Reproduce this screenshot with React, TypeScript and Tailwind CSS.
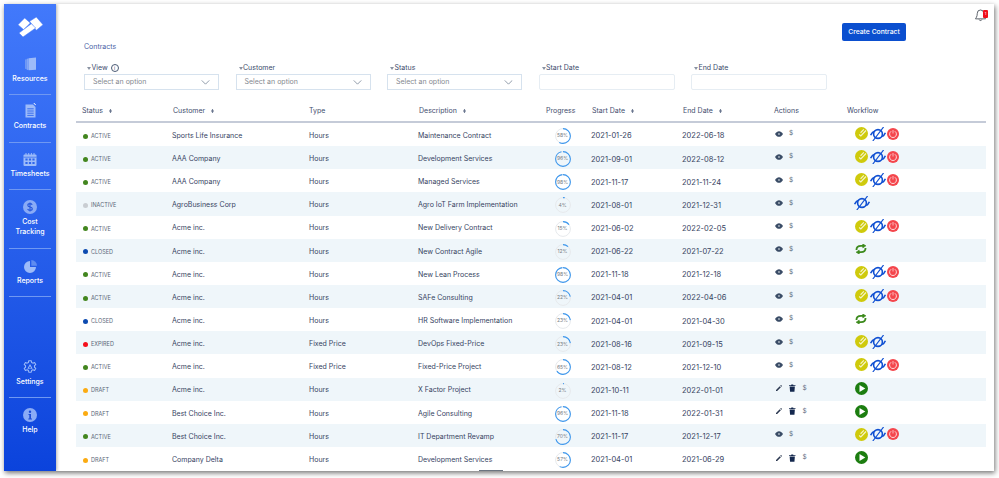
import type { ReactNode } from "react"

type Row = {
  status: string
  customer: string
  type: string
  description: string
  progress: number
  start: string
  end: string
  flow: string
}

const rows: Row[] = [
  { status: "ACTIVE", customer: "Sports Life Insurance", type: "Hours", description: "Maintenance Contract", progress: 58, start: "2021-01-26", end: "2022-06-18", flow: "full" },
  { status: "ACTIVE", customer: "AAA Company", type: "Hours", description: "Development Services", progress: 96, start: "2021-09-01", end: "2022-08-12", flow: "full" },
  { status: "ACTIVE", customer: "AAA Company", type: "Hours", description: "Managed Services", progress: 98, start: "2021-11-17", end: "2021-11-24", flow: "full" },
  { status: "INACTIVE", customer: "AgroBusiness Corp", type: "Hours", description: "Agro IoT Farm Implementation", progress: 4, start: "2021-08-01", end: "2021-12-31", flow: "eye" },
  { status: "ACTIVE", customer: "Acme inc.", type: "Hours", description: "New Delivery Contract", progress: 15, start: "2021-06-02", end: "2022-02-05", flow: "full" },
  { status: "CLOSED", customer: "Acme inc.", type: "Hours", description: "New Contract Agile", progress: 12, start: "2021-06-22", end: "2021-07-22", flow: "sync" },
  { status: "ACTIVE", customer: "Acme inc.", type: "Hours", description: "New Lean Process", progress: 98, start: "2021-11-18", end: "2021-12-18", flow: "full" },
  { status: "ACTIVE", customer: "Acme inc.", type: "Hours", description: "SAFe Consulting", progress: 22, start: "2021-04-01", end: "2022-04-06", flow: "full" },
  { status: "CLOSED", customer: "Acme inc.", type: "Hours", description: "HR Software Implementation", progress: 23, start: "2021-04-01", end: "2021-04-30", flow: "sync" },
  { status: "EXPIRED", customer: "Acme inc.", type: "Fixed Price", description: "DevOps Fixed-Price", progress: 23, start: "2021-08-16", end: "2021-09-15", flow: "expired" },
  { status: "ACTIVE", customer: "Acme inc.", type: "Fixed Price", description: "Fixed-Price Project", progress: 65, start: "2021-08-12", end: "2021-12-10", flow: "full" },
  { status: "DRAFT", customer: "Acme inc.", type: "Hours", description: "X Factor Project", progress: 2, start: "2021-10-11", end: "2022-01-01", flow: "play" },
  { status: "DRAFT", customer: "Best Choice Inc.", type: "Hours", description: "Agile Consulting", progress: 96, start: "2021-11-18", end: "2022-01-31", flow: "play" },
  { status: "ACTIVE", customer: "Best Choice Inc.", type: "Hours", description: "IT Department Revamp", progress: 70, start: "2021-11-17", end: "2021-12-17", flow: "full" },
  { status: "DRAFT", customer: "Company Delta", type: "Hours", description: "Development Services", progress: 57, start: "2021-04-01", end: "2021-06-29", flow: "play" },
]

const dotColors: Record<string, string> = {
  ACTIVE: "bg-[#43861f]",
  INACTIVE: "bg-[#c9cdd2]",
  CLOSED: "bg-[#0d4bb0]",
  EXPIRED: "bg-[#f5101c]",
  DRAFT: "bg-[#fbab12]",
}

function NavItem({ icon, label, divider = true, className = "" }: { icon: ReactNode; label: ReactNode; divider?: boolean; className?: string }) {
  return (
    <div className={`mx-[5px] flex flex-col items-center text-center text-[7px] font-medium leading-[10.5px] text-white ${divider ? "border-b border-[#6f98f2]" : ""} ${className}`}>
      {icon}
      <span className="mt-[2.75px]">{label}</span>
    </div>
  )
}

function Logo() {
  return (
    <svg viewBox="0 0 75 60" className="h-[20px] w-[25px]" fill="#fff" stroke="#3f76f8" strokeWidth="1.5">
      <polygon points="0,23 20,3 37,18 17,38" />
      <polygon points="35,13 55,0 75,23 55,40" />
      <polygon points="3,48 40,20 53,33 15,60" />
    </svg>
  )
}

const navIcon = "#9dbbf9"

function ResourcesIcon() {
  return (
    <svg viewBox="0 0 12 14" className="h-[14px] w-[11px]">
      <path d="M0 2.200 2 1.800v11l-2-.5z" fill="#6f98f3" />
      <path d="M2 1.400 4 1v12.200l-2 .3z" fill="#83a7f6" />
      <path d="M4 .7 12 0v13.200l-8 .7z" fill={navIcon} />
    </svg>
  )
}

function ContractsIcon() {
  return (
    <svg viewBox="0 0 11 15" className="h-[15px] w-[11px]">
      <path d="M.5 1.500h7.500l2.500 2.500v10.500H.5z" fill={navIcon} />
      <path d="M2.300 5.800h6.400M2.300 8h6.400M2.300 10.200h6.400M2.300 12.400h6.400" stroke="#2f66ee" strokeWidth="0.9" />
      <path d="M8.800 0l2 2.200" stroke="#fff" strokeWidth="1" />
    </svg>
  )
}

function CalendarIcon() {
  return (
    <svg viewBox="0 0 14 13" className="h-[13px] w-[14px]">
      <rect x="0.500" y="1.500" width="13" height="11.500" rx="1" fill={navIcon} />
      <path d="M3 0v3M5.700 0v3M8.400 0v3M11 0v3" stroke={navIcon} strokeWidth="1" />
      <path d="M0.500 4.200h13" stroke="#2f66ee" strokeWidth="0.7" />
      <g fill="#2f66ee">
        <rect x="2.400" y="5.500" width="2.200" height="2" />
        <rect x="5.900" y="5.500" width="2.200" height="2" />
        <rect x="9.400" y="5.500" width="2.200" height="2" />
        <rect x="2.400" y="9" width="2.200" height="2" />
        <rect x="5.900" y="9" width="2.200" height="2" />
        <rect x="9.400" y="9" width="2.200" height="2" />
      </g>
    </svg>
  )
}

function CostIcon() {
  return (
    <svg viewBox="0 0 14 14" className="h-[14px] w-[14px]">
      <circle cx="7" cy="7" r="7" fill="#8aabf6" />
      <path d="M9.200 4.800C8.700 3.900 7.800 3.600 7 3.600c-1.300 0-2.200.7-2.200 1.700 0 2.400 4.500 1 4.500 3.400 0 1-1 1.700-2.300 1.700-1 0-1.900-.4-2.400-1.300M7 2.400v9.200" fill="none" stroke="#2455dc" strokeWidth="1.100" />
    </svg>
  )
}

function ReportsIcon() {
  return (
    <svg viewBox="0 0 13 13" className="h-[13px] w-[13px]">
      <path d="M6 1a6 6 0 1 0 6 6H6z" fill={navIcon} />
      <path d="M7.300 0a5.800 5.800 0 0 1 5.700 5.700H7.300z" fill="#5f8cf0" />
    </svg>
  )
}

function SettingsIcon() {
  return (
    <svg viewBox="0 0 16 16" className="h-[14px] w-[14px]" fill="none" stroke={navIcon} strokeWidth="1.200">
      <path d="M6.600.800h2.800l.4 2 1.500.8 1.900-.8 1.400 2.400-1.500 1.300v1.800l1.500 1.300-1.400 2.400-1.900-.8-1.500.8-.4 2H6.600l-.4-2-1.500-.8-1.900.8-1.400-2.400 1.500-1.300V6.500L1.400 5.200l1.400-2.400 1.900.8 1.500-.8z" strokeLinejoin="round" />
      <path d="M8 4.500 11 10H5z" fill={navIcon} stroke="none" />
      <circle cx="8" cy="8.500" r="1.200" fill="#2d60e6" stroke="none" />
    </svg>
  )
}

function HelpIcon() {
  return (
    <svg viewBox="0 0 14 14" className="h-[14px] w-[14px]">
      <circle cx="7" cy="7" r="7" fill="#8aabf6" />
      <circle cx="7" cy="3.700" r="1.200" fill="#1c4cd6" />
      <path d="M5.500 6h2.500v4.500h1v1H5.300v-1h1V7h-.8z" fill="#1c4cd6" />
    </svg>
  )
}

function Sidebar() {
  return (
    <aside className="relative flex w-[52px] shrink-0 flex-col bg-gradient-to-b from-[#4279fb] to-[#0b43dc] font-['Inter',sans-serif] shadow-[1px_0_3px_rgba(0,0,0,0.3)]">
      <div className="flex h-[53px] items-start justify-center pt-[13px]">
        <Logo />
      </div>
      <NavItem icon={<ResourcesIcon />} label="Resources" className="h-[38px]" />
      <NavItem icon={<ContractsIcon />} label="Contracts" className="h-[48px] pt-[8px]" />
      <NavItem icon={<CalendarIcon />} label="Timesheets" className="h-[47px] pt-[10px]" />
      <NavItem icon={<CostIcon />} label={<>Cost<br />Tracking</>} className="h-[59px] pt-[10px]" />
      <NavItem icon={<ReportsIcon />} label="Reports" className="h-[48px] pt-[11px]" />
      <NavItem icon={<SettingsIcon />} label="Settings" className="mt-auto h-[38px]" />
      <NavItem icon={<HelpIcon />} label="Help" divider={false} className="mb-[35px] h-[38px] pt-[10px]" />
    </aside>
  )
}

function Chevron() {
  return (
    <svg viewBox="0 0 10 6" className="h-[5px] w-[9px]" fill="none" stroke="#5b6b80" strokeWidth="0.8">
      <path d="M.5.500 5 5 9.500.500" />
    </svg>
  )
}

function FilterLabel({ label, info }: { label: string; info?: boolean }) {
  return (
    <div className="mb-[1px] flex h-[10px] items-center pl-[3px] text-[7px] leading-[10px] text-[#3a4a6b]">
      <span className="mr-[0.5px] h-0 w-0 border-x-[2.5px] border-t-[3.5px] border-x-transparent border-t-[#8a93a3]" />
      {label}
      {info && (
        <span className="ml-[3px] flex h-[8px] w-[8px] items-center justify-center rounded-full border-[0.7px] border-[#4a5a75] text-[5px] leading-none">i</span>
      )}
    </div>
  )
}

function SelectFilter({ label, info }: { label: string; info?: boolean }) {
  return (
    <div className="w-[135px]">
      <FilterLabel label={label} info={info} />
      <div className="flex h-[16px] items-center justify-between border border-[#d6e2ee] pl-[8px] pr-[8px] text-[7px] text-[#85898f]">
        Select an option
        <Chevron />
      </div>
    </div>
  )
}

function DateFilter({ label }: { label: string }) {
  return (
    <div className="w-[136px]">
      <FilterLabel label={label} />
      <div className="h-[16px] rounded-[2px] border border-[#e6edf3]" />
    </div>
  )
}

function SortIcon() {
  return (
    <svg viewBox="0 0 4 6" className="ml-[6px] inline-block h-[4px] w-[3px]" fill="#3a4a6b">
      <path d="M2 0l2 2.500H0zM2 6 0 3.500h4z" />
    </svg>
  )
}

function ProgressRing({ value }: { value: number }) {
  const r = 7.4
  const c = 2 * Math.PI * r
  return (
    <div className="relative ml-[9.5px] h-[16px] w-[16px]">
      <svg viewBox="0 0 16 16" className="h-[16px] w-[16px] -rotate-90">
        <circle cx="8" cy="8" r={r} fill="none" stroke="#e6e9ec" strokeWidth="1" />
        <circle cx="8" cy="8" r={r} fill="none" stroke="#3c97ee" strokeWidth="1.1" strokeDasharray={`${(value / 100) * c} ${c}`} />
      </svg>
      <span className="absolute inset-0 flex items-center justify-center text-[5px] text-[#777b82]">{value}%</span>
    </div>
  )
}

function EyeIcon() {
  return (
    <svg viewBox="0 0 10 7" className="h-[6px] w-[8px]">
      <path d="M0 3.500C1.500 1 3.200 0 5 0s3.500 1 5 3.500C8.500 6 6.800 7 5 7S1.500 6 0 3.500z" fill="#3a4c66" />
      <circle cx="5" cy="3.500" r="1.200" fill="#aab4c0" />
    </svg>
  )
}

function PencilIcon() {
  return (
    <svg viewBox="0 0 8 8" className="h-[6px] w-[6px]" fill="#2b3850">
      <path d="M0 8V6.500L5 1.500 6.500 3 1.500 8zM5.600.900 6.300.200a.6.6 0 0 1 .8 0l.7.700a.6.6 0 0 1 0 .8l-.7.700z" />
    </svg>
  )
}

function TrashIcon() {
  return (
    <svg viewBox="0 0 8 9" className="h-[8px] w-[6.5px]" fill="#14284e">
      <path d="M0 1h2.500l.4-.8h2.200l.4.800H8v1H0zM.8 2.600h6.400L6.700 9H1.300z" />
    </svg>
  )
}

function Actions({ draft }: { draft: boolean }) {
  const dollar = <span className="text-[6.5px] leading-none text-[#5d6b7e]">$</span>
  if (draft) {
    return (
      <div className="mb-[5px] flex items-center pl-[3px]">
        <PencilIcon />
        <span className="ml-[7px] mr-[7px] flex"><TrashIcon /></span>
        {dollar}
      </div>
    )
  }
  return (
    <div className="mb-[5px] flex items-center pl-[2px]">
      <EyeIcon />
      <span className="ml-[6px] flex">{dollar}</span>
    </div>
  )
}

function ApproveIcon() {
  return (
    <svg viewBox="0 0 14 14" className="h-[13px] w-[13px]">
      <circle cx="7" cy="7" r="7" fill="#cfca0c" />
      <path d="M4.500 8 6.300 9.600 11.800 3.800" fill="none" stroke="#f6f5c8" strokeWidth="1.300" />
      <path d="M6 6.200 9.500 2.500" stroke="#f6f5c8" strokeWidth="1.200" />
    </svg>
  )
}

function HideIcon() {
  return (
    <svg viewBox="0 0 16 14" className="h-[14px] w-[16px]" fill="none" stroke="#0f4fd2">
      <circle cx="8" cy="7" r="4.400" strokeWidth="1.600" />
      <path d="M.6 8.300C1.400 6.500 2.400 5.200 3.800 4.300M15.400 5.700C14.600 7.500 13.600 8.800 12.200 9.700" strokeWidth="1.600" />
      <path d="M2.800 14 13.600 0" strokeWidth="1.200" />
    </svg>
  )
}

function PowerIcon() {
  return (
    <svg viewBox="0 0 12 12" className="h-[12px] w-[12px]" fill="#f4464c">
      <circle cx="6" cy="6" r="6" />
      <path d="M4.100 3.300a3.400 3.400 0 1 0 3.800 0" fill="none" stroke="#fff" strokeWidth="0.8" />
      <path d="M6 2v3.500" stroke="#ffd7d9" strokeWidth="0.8" />
    </svg>
  )
}

function PlayIcon() {
  return (
    <svg viewBox="0 0 13 13" className="h-[13px] w-[13px]">
      <circle cx="6.500" cy="6.500" r="6.500" fill="#1c7d10" />
      <path d="M4.500 3 10.300 6.500 4.500 10z" fill="#fff" />
    </svg>
  )
}

function SyncIcon() {
  return (
    <svg viewBox="0 0 13 11" className="h-[10px] w-[12px]" fill="#3c8a1c" stroke="#3c8a1c">
      <path d="M1.500 6.500C1.500 3.500 3.500 2 6.500 2h3" fill="none" strokeWidth="2" />
      <path d="M8.500 0 11.800 2 8.500 4.200z" strokeWidth="0.8" />
      <path d="M11.500 4.500c0 3-2 4.500-5 4.500h-3" fill="none" strokeWidth="2" />
      <path d="M4.500 6.800 1.200 9l3.300 2z" strokeWidth="0.8" />
    </svg>
  )
}

function Workflow({ flow }: { flow: string }) {
  if (flow === "eye") return <div className="mb-[5px] flex pl-[8px]"><HideIcon /></div>
  if (flow === "sync") return <div className="mb-[5px] flex pl-[9px]"><SyncIcon /></div>
  if (flow === "play") return <div className="mb-[5px] flex pl-[9px]"><PlayIcon /></div>
  return (
    <div className="mb-[5px] flex items-center pl-[9px]">
      <ApproveIcon />
      <span className="ml-[1.5px] flex"><HideIcon /></span>
      {flow === "full" && <span className="ml-[1px] flex"><PowerIcon /></span>}
    </div>
  )
}

const gridCols = "grid grid-cols-[95px_137px_109px_128px_45px_91px_92px_73px_140px] items-center"

function BellIcon() {
  return (
    <div className="absolute right-[6px] top-[4px] h-[14px] w-[13px]">
      <svg viewBox="0 0 12 14" className="h-[14px] w-[11px]" fill="none" stroke="#3f4650" strokeWidth="0.9">
        <path d="M6 1.500a3.600 3.600 0 0 0-3.500 3.700c0 4-1.800 5.300-2 6h11c-.2-.7-2-2-2-6A3.600 3.600 0 0 0 6 1.500z" />
        <path d="M4.500 12a1.600 1.600 0 0 0 3 0" />
      </svg>
      <span className="absolute right-0 top-[2px] flex h-[8px] w-[5px] items-center justify-center rounded-[1px] bg-[#f0101c] text-[4px] leading-none text-white">1</span>
    </div>
  )
}

export default function App() {
  return (
    <div className="h-[478px] w-[999px] overflow-hidden bg-white pl-[4px] pt-[4px]">
      <div className="relative flex h-[467px] w-[990px] overflow-hidden bg-white shadow-[1px_2px_5px_rgba(0,0,0,0.55)]">
        <Sidebar />
        <main className="relative min-w-0 flex-1 pl-[20px] font-['Inter',sans-serif]">
          <BellIcon />
          <div className="flex h-[37px] justify-end pr-[88px] pt-[19px]">
            <button className="h-[18px] w-[64px] rounded-[2px] bg-[#0b4fcf] text-[6.8px] font-medium text-white">Create Contract</button>
          </div>
          <div className="pl-[8px] pt-[1px] text-[7px] leading-[10px] text-[#4a5fa6]">Contracts</div>
          <div className="ml-[8px] mt-[11px] flex gap-[16.5px]">
            <SelectFilter label="View" info />
            <SelectFilter label="Customer" />
            <SelectFilter label="Status" />
            <DateFilter label="Start Date" />
            <DateFilter label="End Date" />
          </div>
          <div className="mt-[11px] w-[910px]">
            <div className={`${gridCols} h-[22px] border-b-2 border-[#c5cbd8] text-[7px] text-[#3f4d6e]`}>
              <span className="pl-[6px]">Status<SortIcon /></span>
              <span className="pl-[2px]">Customer<SortIcon /></span>
              <span className="pl-[1px]">Type</span>
              <span className="pl-[2px]">Description<SortIcon /></span>
              <span className="pl-[1px]">Progress</span>
              <span className="pl-[2px]">Start Date<SortIcon /></span>
              <span className="pl-[2px]">End Date<SortIcon /></span>
              <span className="pl-[1px]">Actions</span>
              <span className="pl-[1px]">Workflow</span>
            </div>
            {rows.map((row, i) => (
              <div key={i} className={`${gridCols} h-[23.15px] pt-[3px] text-[7px] text-[#36435f] ${i % 2 === 1 ? "bg-[#eff6fa]" : ""}`}>
                <span className="flex items-center pl-[7px] text-[5.5px] text-[#5a6677]">
                  <span className={`mr-[3px] h-[5px] w-[5px] rounded-full ${dotColors[row.status]}`} />
                  {row.status}
                </span>
                <span className="pl-[1px]">{row.customer}</span>
                <span className="pl-[1px]">{row.type}</span>
                <span className="pl-[1px]">{row.description}</span>
                <ProgressRing value={row.progress} />
                <span className="pl-[1px] text-[7.5px]">{row.start}</span>
                <span className="pl-[1px] text-[7.5px]">{row.end}</span>
                <Actions draft={row.status === "DRAFT"} />
                <Workflow flow={row.flow} />
              </div>
            ))}
          </div>
          <div className="absolute bottom-0 left-[423px] h-[1px] w-[24px] bg-[#6b7480]" />
        </main>
      </div>
    </div>
  )
}
